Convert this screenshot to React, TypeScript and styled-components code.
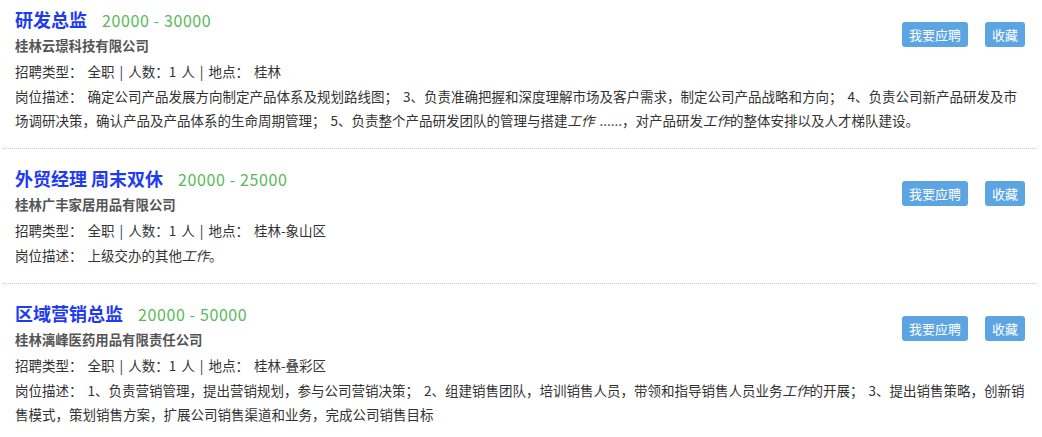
import React from "react";
import styled, { createGlobalStyle } from "styled-components";

const GlobalStyle = createGlobalStyle`
  html, body {
    margin: 0;
    padding: 0;
    background: #fff;
  }
  body {
    font-family: "Noto Sans CJK SC", "Microsoft YaHei", sans-serif;
    color: #333;
  }
`;

interface Job {
    title: string;
    salary: string;
    company: string;
    type: string;
    count: number;
    place: string;
    desc: React.ReactNode;
}

const jobs: Job[] = [
    {
        title: "研发总监",
        salary: "20000 - 30000",
        company: "桂林云璟科技有限公司",
        type: "全职",
        count: 1,
        place: "桂林",
        desc: (
            <>
                确定公司产品发展方向制定产品体系及规划路线图； 3、负责准确把握和深度理解市场及客户需求，制定公司产品战略和方向； 4、负责公司新产品研发及市场调研决策，确认产品及产品体系的生命周期管理； 5、负责整个产品研发团队的管理与搭建<em>工作</em> ......，对产品研发<em>工作</em>的整体安排以及人才梯队建设。
            </>
        ),
    },
    {
        title: "外贸经理 周末双休",
        salary: "20000 - 25000",
        company: "桂林广丰家居用品有限公司",
        type: "全职",
        count: 1,
        place: "桂林-象山区",
        desc: (
            <>
                上级交办的其他<em>工作</em>。
            </>
        ),
    },
    {
        title: "区域营销总监",
        salary: "20000 - 50000",
        company: "桂林漓峰医药用品有限责任公司",
        type: "全职",
        count: 1,
        place: "桂林-叠彩区",
        desc: (
            <>
                1、负责营销管理，提出营销规划，参与公司营销决策； 2、组建销售团队，培训销售人员，带领和指导销售人员业务<em>工作</em>的开展； 3、提出销售策略，创新销售模式，策划销售方案，扩展公司销售渠道和业务，完成公司销售目标
            </>
        ),
    },
];

const List = styled.div`
  padding: 0 5px 0 3px;
`;

const Item = styled.div`
  padding: 17px 12px 16px;
  border-bottom: 1px dotted #c8c8c8;
  &:first-child {
    padding-top: 7px;
  }
  &::after {
    content: "";
    display: block;
    clear: both;
  }
`;

const Actions = styled.div`
  float: right;
  display: flex;
  gap: 17px;
  margin-top: 15px;
`;

const Button = styled.button`
  height: 25px;
  padding: 0 7px;
  border: none;
  border-radius: 3px;
  background: #5ca5e2;
  color: #fff;
  font-family: inherit;
  font-size: 13px;
  line-height: 25px;
  cursor: pointer;
`;

const TitleRow = styled.div`
  display: flex;
  align-items: baseline;
  height: 24px;
  line-height: 24px;
`;

const Title = styled.a`
  font-size: 18px;
  font-weight: bold;
  color: #1f3bf2;
  text-decoration: none;
`;

const Salary = styled.span`
  margin-left: 15px;
  font-size: 16px;
  letter-spacing: 0.6px;
  color: #58b958;
`;

const Company = styled.div`
  margin-top: 2px;
  font-size: 13.4px;
  font-weight: bold;
  color: #555;
  line-height: 24px;
`;

const Line = styled.div`
  margin-top: 2px;
  font-size: 13.5px;
  color: #333;
  line-height: 24px;
  word-spacing: 2px;
`;

const DescLine = styled(Line)`
  margin-top: 1px;
  em {
    font-style: italic;
  }
`;

const Label = styled.span`
  margin-right: 5px;
`;

export default function App() {
    return (
        <>
            <GlobalStyle />
            <List>
                {jobs.map((job) => (
                    <Item key={job.title}>
                        <Actions>
                            <Button>我要应聘</Button>
                            <Button>收藏</Button>
                        </Actions>
                        <TitleRow>
                            <Title href="#">{job.title}</Title>
                            <Salary>{job.salary}</Salary>
                        </TitleRow>
                        <Company>{job.company}</Company>
                        <Line>
                            <Label>招聘类型：</Label>
                            {job.type} | 人数：{job.count} 人 | 地点：
                            <Label />
                            {job.place}
                        </Line>
                        <DescLine>
                            <Label>岗位描述：</Label>
                            {job.desc}
                        </DescLine>
                    </Item>
                ))}
            </List>
        </>
    );
}
